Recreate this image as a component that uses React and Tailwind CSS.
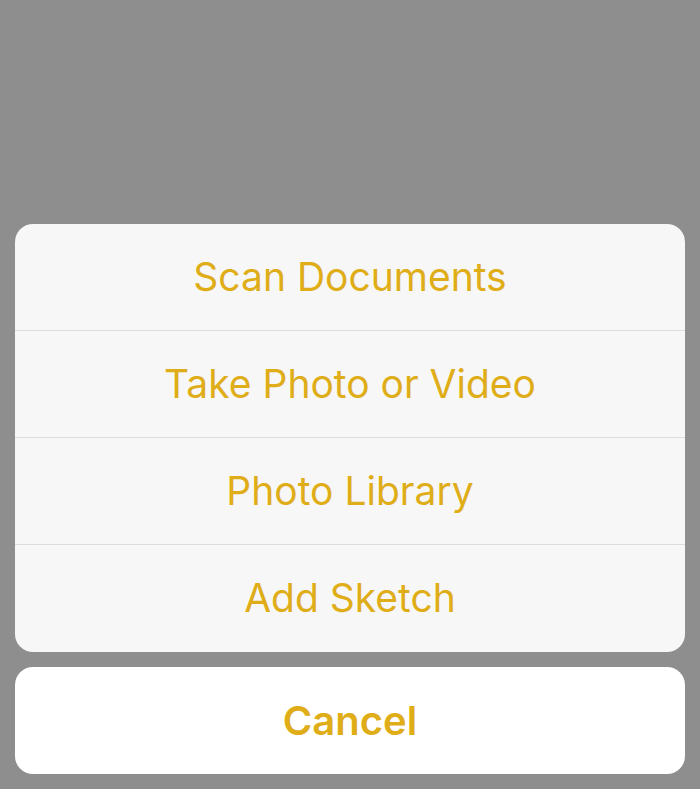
import React from 'react';

// iOS style action sheet over a dimmed backdrop
const options = ['Scan Documents', 'Take Photo or Video', 'Photo Library', 'Add Sketch'];

const App = () => {
  return (
    <div
      className="w-[700px] h-[789px] bg-[#8e8e8e] flex flex-col px-[15px] pt-[224px]"
      style={{ fontFamily: 'Inter, "Noto Sans", sans-serif' }}
    >
      {/* Option group */}
      <div className="bg-[#f7f7f7] rounded-[18px] overflow-hidden">
        {options.map((label, i) => (
          <div
            key={label}
            className={
              i < options.length - 1
                ? 'h-[107px] flex items-center justify-center border-b border-[#dcdcdc]'
                : 'h-[107px] flex items-center justify-center'
            }
          >
            <span className="text-[39px] text-[#dfad18]">{label}</span>
          </div>
        ))}
      </div>

      {/* Cancel button */}
      <div className="mt-[15px] h-[107px] bg-white rounded-[18px] flex items-center justify-center">
        <span className="text-[40px] font-semibold text-[#dfad18]">Cancel</span>
      </div>
    </div>
  );
};

export default App;
